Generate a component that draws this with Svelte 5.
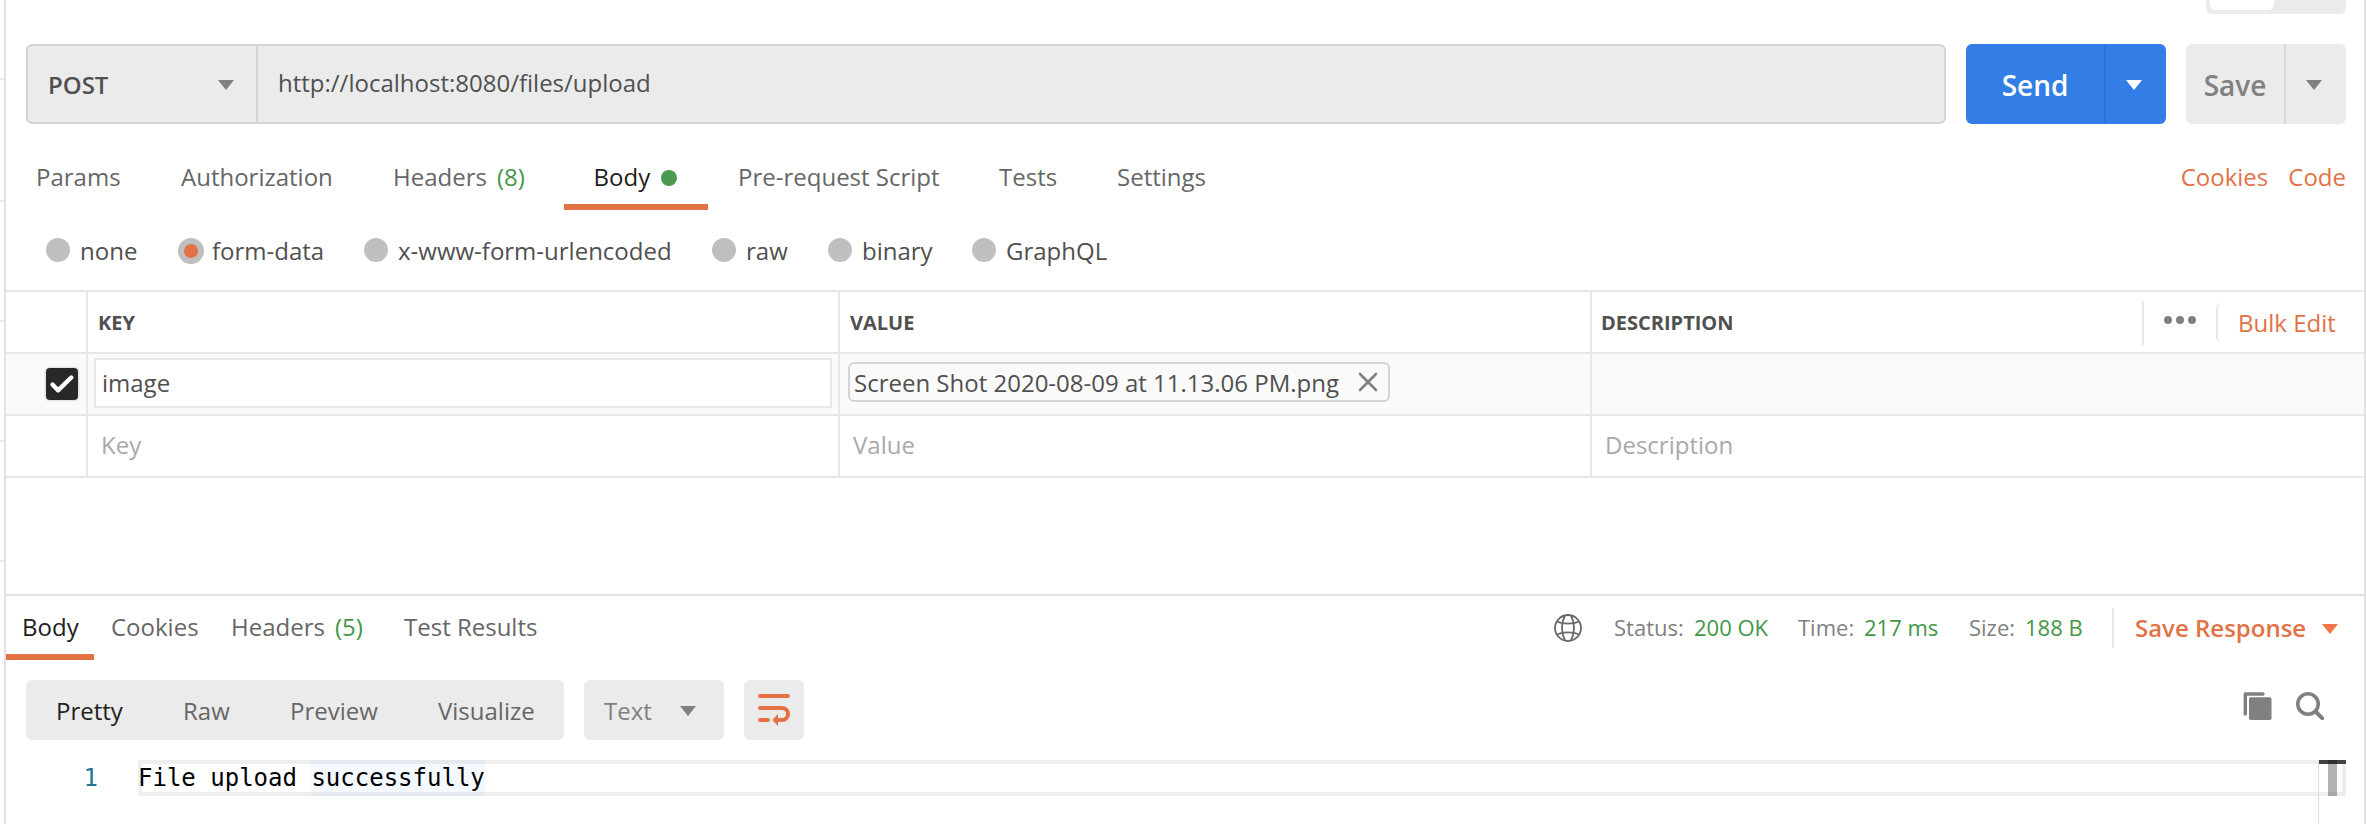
<script>
  const requestTabs = [
    { label: 'Params', width: 145 },
    { label: 'Authorization', width: 212 },
    { label: 'Headers', count: '(8)', width: 201 },
    { label: 'Body', active: true, dot: true, width: 144 },
    { label: 'Pre-request Script', width: 261 },
    { label: 'Tests', width: 118 },
    { label: 'Settings', width: 150 }
  ];
  const bodyModes = [
    { label: 'none', width: 132 },
    { label: 'form-data', width: 186, selected: true },
    { label: 'x-www-form-urlencoded', width: 348 },
    { label: 'raw', width: 116 },
    { label: 'binary', width: 144 },
    { label: 'GraphQL', width: 150 }
  ];
  const responseTabs = [
    { label: 'Body', width: 88, active: true },
    { label: 'Cookies', width: 120 },
    { label: 'Headers', count: '(5)', width: 173 },
    { label: 'Test Results', width: 170 }
  ];
  const metrics = [
    { label: 'Status:', value: '200 OK', width: 184, labelWidth: 80 },
    { label: 'Time:', value: '217 ms', width: 171, labelWidth: 66 },
    { label: 'Size:', value: '188 B', width: 143, labelWidth: 56 }
  ];
  const views = [
    { label: 'Pretty', width: 127, active: true },
    { label: 'Raw', width: 107 },
    { label: 'Preview', width: 148 },
    { label: 'Visualize', width: 126 }
  ];
</script>

{#snippet caret()}
  <svg class="caret" width="16" height="10" viewBox="0 0 16 10"><path d="M0 0H16L8 10Z" fill="currentColor" /></svg>
{/snippet}

<div class="app">
  <aside class="rail">
    {#each [0, 1, 2, 3, 4] as n (n)}<i></i>{/each}
  </aside>
  <main>
    <header class="top"><div class="toggle"><span></span></div></header>

    <div class="request">
      <div class="address">
        <div class="method"><span>POST</span>{@render caret()}</div>
        <div class="url">http://localhost:8080/files/upload</div>
      </div>
      <div class="split send"><b>Send</b><span>{@render caret()}</span></div>
      <div class="split save"><b>Save</b><span>{@render caret()}</span></div>
    </div>

    <nav class="tabs">
      {#each requestTabs as t (t.label)}
        <div class="tab" class:active={t.active} style:width="{t.width}px">
          {t.label}{#if t.count}<em>{t.count}</em>{/if}{#if t.dot}<i class="dot"></i>{/if}
        </div>
      {/each}
      <div class="links"><span>Cookies</span><span>Code</span></div>
    </nav>

    <div class="modes">
      {#each bodyModes as m (m.label)}
        <div class="mode" style:width="{m.width}px">
          <i class="radio" class:selected={m.selected}></i><span>{m.label}</span>
        </div>
      {/each}
    </div>

    <section class="table">
      <div class="row head">
        <div></div>
        <div class="cell">KEY</div>
        <div class="cell">VALUE</div>
        <div class="cell desc">
          <span>DESCRIPTION</span>
          <div class="more">
            <svg width="32" height="8" viewBox="0 0 32 8"><g fill="#808080"><circle cx="4" cy="4" r="4" /><circle cx="16" cy="4" r="4" /><circle cx="28" cy="4" r="4" /></g></svg>
          </div>
          <div class="bulk">Bulk Edit</div>
        </div>
      </div>
      <div class="row filled">
        <div class="check">
          <span><svg width="32" height="32" viewBox="0 0 32 32"><path d="M6.5 16.5L12 22.3L25.3 9.5" fill="none" stroke="#fff" stroke-width="4.4" stroke-linecap="round" stroke-linejoin="round" /></svg></span>
        </div>
        <div class="cell"><div class="input">image</div></div>
        <div class="cell">
          <div class="chip">
            <span>Screen Shot 2020-08-09 at 11.13.06 PM.png</span>
            <svg width="20" height="20" viewBox="0 0 20 20"><path d="M2 2L18 18M18 2L2 18" stroke="#808080" stroke-width="2.6" stroke-linecap="round" /></svg>
          </div>
        </div>
        <div class="cell"></div>
      </div>
      <div class="row blank">
        <div></div>
        <div class="cell">Key</div>
        <div class="cell">Value</div>
        <div class="cell">Description</div>
      </div>
    </section>

    <section class="response">
      <div class="resbar">
        {#each responseTabs as t (t.label)}
          <div class="tab" class:active={t.active} style:width="{t.width}px">
            {t.label}{#if t.count}<em>{t.count}</em>{/if}
          </div>
        {/each}
        <div class="meta">
          <svg class="globe" width="28" height="28" viewBox="0 0 28 28">
            <g fill="none" stroke="#6b6b6b" stroke-width="1.8">
              <circle cx="14" cy="14" r="13" />
              <path d="M11 1.5C7 9 7 19 11 26.5M17 1.5C21 9 21 19 17 26.5" />
              <path d="M2.5 7.5C9 10.3 19 10.3 25.5 7.5M2.5 20.5C9 17.7 19 17.7 25.5 20.5" />
            </g>
          </svg>
          {#each metrics as m (m.label)}
            <div class="metric" style:width="{m.width}px">
              <span style:width="{m.labelWidth}px">{m.label}</span><em>{m.value}</em>
            </div>
          {/each}
          <div class="saveres"><b>Save Response</b>{@render caret()}</div>
        </div>
      </div>

      <div class="tools">
        <div class="views">
          {#each views as v (v.label)}
            <span class:active={v.active} style:width="{v.width}px">{v.label}</span>
          {/each}
        </div>
        <div class="format"><span>Text</span>{@render caret()}</div>
        <div class="wrap">
          <svg width="32" height="32" viewBox="0 0 32 32">
            <path d="M2 2H30M2 14H24A6 6 0 0 1 24 26H19M2 26H10" fill="none" stroke="#e27246" stroke-width="4" stroke-linecap="round" />
            <path d="M14.3 26L20 20V32Z" fill="#e27246" />
          </svg>
        </div>
        <div class="actions">
          <svg width="29" height="28" viewBox="0 0 29 28">
            <path d="M2.3 22V2H20" fill="none" stroke="#808080" stroke-width="3.4" stroke-linecap="round" stroke-linejoin="round" />
            <rect x="6" y="5.3" width="22.5" height="22.7" rx="1.8" fill="#808080" />
          </svg>
          <svg width="28" height="28" viewBox="0 0 28 28">
            <g fill="none" stroke="#808080"><circle cx="12" cy="12" r="10.2" stroke-width="3.6" /><path d="M19.5 19.5L26.2 26.2" stroke-width="4" stroke-linecap="round" /></g>
          </svg>
        </div>
      </div>

      <div class="editor">
        <div class="num">1</div>
        <div class="line">File upload <mark>successfully</mark></div>
        <div class="map"><i class="cap"></i><i class="thumb"></i></div>
      </div>
    </section>
  </main>
</div>

<style>
  :global(body) { margin: 0; background: #fff; overflow: hidden; }
  .app, .app * { box-sizing: border-box; }
  .app {
    display: flex; width: 2366px; height: 824px; overflow: hidden;
    font: 24px/34px "Open Sans", sans-serif; color: #505050; white-space: nowrap;
  }
  em { font-style: normal; color: #459648; }
  b { font-weight: 600; }
  svg { display: block; flex: none; }
  .rail { width: 4px; display: flex; flex-direction: column; padding-top: 78px; gap: 118px; }
  .rail i { height: 2px; background: #e8e8e8; flex: none; }
  .rail i:first-child { margin-bottom: 2px; }
  main { width: 2362px; border: solid #e2e2e2; border-width: 0 2px; }

  .top { height: 44px; display: flex; justify-content: flex-end; padding-right: 18px; }
  .toggle { width: 140px; height: 14px; background: #ebebeb; border-radius: 0 0 6px 6px; padding-left: 4px; }
  .toggle span { display: block; width: 64px; height: 10px; background: #fff; border-radius: 0 0 6px 6px; }

  .request { display: flex; gap: 20px; height: 80px; padding: 0 18px 0 20px; }
  .address { display: flex; width: 1920px; border: 2px solid #d4d4d4; border-radius: 6px; background: #ebebeb; }
  .method {
    width: 230px; border-right: 2px solid #d4d4d4; padding: 2px 22px 0 20px;
    display: flex; align-items: center; justify-content: space-between; font-weight: 600;
  }
  .method .caret { color: #808080; }
  .url { padding: 20px 0 0 20px; }
  .split { display: flex; border-radius: 6px; font-size: 28px; }
  .split b { flex: 1; text-align: center; line-height: 82px; }
  .split span { display: flex; align-items: center; width: 62px; padding-left: 20px; border-left: 2px solid; }
  .split .caret { margin-top: 2px; }
  .send { width: 200px; background: #337de7; color: #fff; }
  .send span { border-color: #2c73d9; }
  .save { width: 160px; background: #ebebeb; color: #808080; }
  .save span { border-color: #d8d8d8; }

  .tabs { display: flex; height: 66px; margin-top: 20px; padding-right: 18px; }
  .tab { flex: none; line-height: 66px; color: #666; }
  .tab em { margin-left: 10px; }
  .tab.active { color: #212121; border-bottom: 6px solid #e27246; }
  .tabs .tab { padding-left: 30px; }
  .tabs .tab.active { padding-left: 29.5px; }
  .dot { display: inline-block; width: 16px; height: 16px; border-radius: 50%; background: #4b9a50; margin-left: 11px; vertical-align: 0; }
  .links { display: flex; gap: 20px; margin-left: auto; line-height: 66px; color: #e27246; }

  .modes { display: flex; height: 80px; padding: 28px 0 0 40px; }
  .mode { display: flex; gap: 10px; line-height: 26px; }
  .radio { width: 24px; height: 24px; border-radius: 50%; background: #bfbfbf; }
  .radio.selected { width: 26px; height: 26px; border: 6px solid #bfbfbf; background: #e27246; margin-right: -2px; }

  .table { height: 304px; border-top: 2px solid #e8e8e8; }
  .row { display: grid; grid-template-columns: 80px 752px 752px 1fr; height: 62px; border-bottom: 2px solid #e8e8e8; }
  .cell { border-left: 2px solid #e8e8e8; }
  .head .cell { padding-left: 10px; font-size: 20px; font-weight: 700; line-height: 61px; }
  .head .desc { display: flex; align-items: center; padding-left: 9px; }
  .more { margin-left: auto; width: 74px; height: 44px; border-left: 2px solid #e8e8e8; padding: 14px 0 0 20px; margin-top: 0; }
  .more svg { margin-top: 1px; }
  .bulk { width: 148px; height: 40px; border-left: 2px solid #e8e8e8; border-radius: 6px; padding-left: 20px; font-size: 24px; font-weight: 400; color: #e27246; line-height: 40px; }
  .filled { background: #fafafa; }
  .check { padding: 14px 0 0 40px; }
  .check span { display: block; width: 32px; height: 32px; border-radius: 4px; background: #282828; box-shadow: 0 0 0 1.5px #e4e4e4; }
  .input { margin: 4px 0 0 6px; width: 738px; height: 50px; border: 2px solid #e8e8e8; background: #fff; padding-left: 6px; line-height: 46px; }
  .chip { margin: 8px 0 0 8px; width: 542px; height: 40px; border: 2px solid #d4d4d4; border-radius: 6px; padding: 0 10px 0 4px; display: flex; justify-content: space-between; align-items: center; }
  .chip span { padding-top: 2px; }
  .blank { color: #a9a9a9; line-height: 58px; }
  .blank .cell { padding-left: 13px; }

  .response { border-top: 2px solid #e2e2e2; }
  .resbar { display: flex; height: 64px; }
  .resbar .tab { line-height: 62px; padding-left: 17px; }
  .resbar .tab.active { padding-left: 16px; }
  .meta { display: flex; margin-left: auto; padding-right: 26px; font-size: 22px; line-height: 63px; }
  .globe { margin: 18px 32px 0 0; }
  .metric { display: flex; color: #808080; }
  .metric span { flex: none; }
  .saveres { display: flex; align-items: center; justify-content: space-between; width: 226px; height: 40px; margin-top: 12px; border-left: 2px solid #e8e8e8; padding-left: 21px; color: #e27246; font-size: 24px; line-height: 38px; }
  .saveres .caret { color: #f0764a; margin-top: 2px; }

  .tools { display: flex; gap: 20px; height: 60px; margin: 20px 22px 20px 20px; }
  .views, .format, .wrap { background: #ebebeb; border-radius: 6px; line-height: 61px; }
  .views { display: flex; width: 538px; padding-left: 30px; color: #666; }
  .views .active { color: #212121; }
  .format { display: flex; width: 140px; padding: 0 28px 0 20px; align-items: center; justify-content: space-between; color: #808080; }
  .format .caret { margin-top: 2px; }
  .wrap { width: 60px; padding: 14px; }
  .actions { display: flex; gap: 24px; margin: 12px 18px 0 auto; }

  .editor { position: relative; display: flex; height: 64px; font: 24px/36px "DejaVu Sans Mono", monospace; color: #000; }
  .num { width: 132px; padding-right: 40px; text-align: right; color: #237893; }
  .line { width: 2208px; height: 36px; border: 4px solid #eee; line-height: 28px; text-indent: -4px; }
  mark { display: inline-block; text-indent: 0; height: 36px; margin: -4px 0; line-height: 36px; vertical-align: top; color: inherit; background: rgba(173, 214, 255, 0.15); }
  .map { position: absolute; right: 18px; top: 0; width: 28px; height: 64px; border-left: 1px solid #ddd; }
  .cap { position: absolute; inset: 0 0 auto 0; height: 4px; background: #424242; }
  .thumb { position: absolute; left: 9px; top: 0; width: 9px; height: 36px; background: rgba(0, 0, 0, 0.3); }
</style>
